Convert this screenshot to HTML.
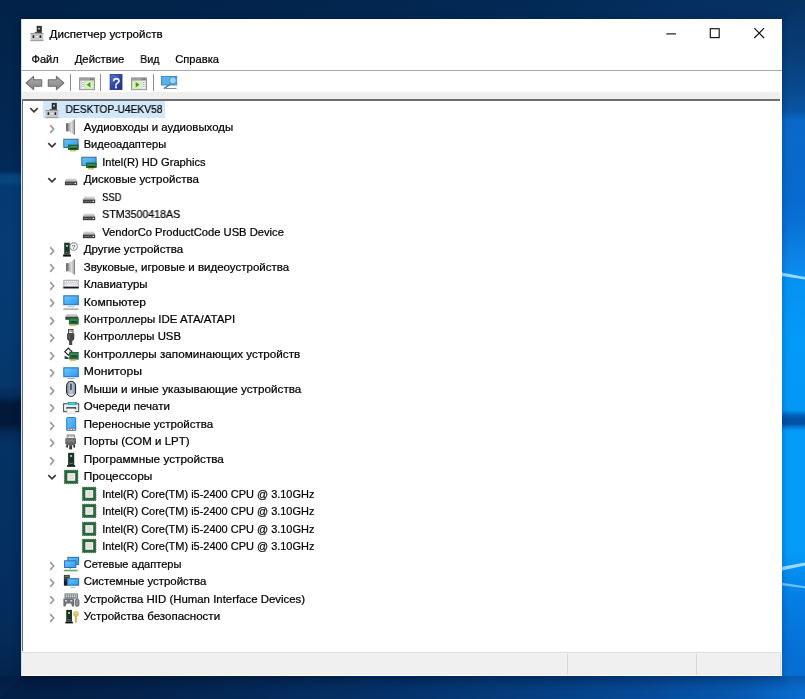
<!DOCTYPE html>
<html lang="ru"><head><meta charset="utf-8"><title>Диспетчер устройств</title>
<style>
html,body{margin:0;padding:0;}
body{width:805px;height:699px;overflow:hidden;position:relative;background:#04285a;font-family:'Liberation Sans', sans-serif;font-size:10.8px;}
#bg{position:absolute;left:0;top:0;width:805px;height:699px;}
#win{position:absolute;left:21px;top:19px;width:761px;height:657px;background:#fff;box-shadow:0 1px 7px rgba(0,0,20,0.28);}
.a{position:absolute;display:block;overflow:visible;}
.t{position:absolute;white-space:pre;will-change:transform;-webkit-text-stroke:0.22px #000;filter:blur(0.35px);line-height:14px;height:14px;font-size:10.8px;transform-origin:0 50%;}
.sel{position:absolute;background:#d1e8fb;}
#menuline{position:absolute;left:21px;top:69.5px;width:761px;height:1px;background:#a9a9a9;}
#tbband{position:absolute;left:21.6px;top:92px;width:758.2px;height:7px;background:#efefef;}
#treetop{position:absolute;left:22px;top:99.1px;width:757.6px;height:1.8px;background:#6e6e6e;}
#treeleft{position:absolute;left:22px;top:99px;width:1px;height:551.8px;background:#6c7076;}
#winleft{position:absolute;left:21px;top:19px;width:1px;height:657px;background:#cfe0f2;}
#status{position:absolute;left:22px;top:652.3px;width:759px;height:23px;background:#f0f0f0;border-top:1.3px solid #dcdcdc;box-sizing:border-box;}
.sd{position:absolute;top:654px;width:1px;height:21px;background:#d9d9d9;}
.sep{position:absolute;top:74px;width:1px;height:17px;background:#8d8d8d;}
</style></head>
<body>
<svg width="0" height="0" style="position:absolute"><defs><linearGradient id="gSp" x1="0" y1="0" x2="1" y2="0"><stop offset="0" stop-color="#6f6f6f"/><stop offset="0.3" stop-color="#a9a9a9"/><stop offset="0.62" stop-color="#dedede"/><stop offset="0.85" stop-color="#b4b4b4"/><stop offset="1" stop-color="#7d7d7d"/></linearGradient><linearGradient id="gScr" x1="0" y1="0" x2="1" y2="1"><stop offset="0" stop-color="#6cc4fb"/><stop offset="1" stop-color="#2f9bee"/></linearGradient><linearGradient id="gMs" x1="0" y1="0" x2="1" y2="0"><stop offset="0" stop-color="#7f8a9c"/><stop offset="0.5" stop-color="#c3cad6"/><stop offset="1" stop-color="#8490a4"/></linearGradient><linearGradient id="gHelp" x1="0" y1="0" x2="1" y2="1"><stop offset="0" stop-color="#5b78d0"/><stop offset="0.5" stop-color="#2f47ad"/><stop offset="1" stop-color="#22328c"/></linearGradient><linearGradient id="gArr" x1="0" y1="0" x2="0" y2="1"><stop offset="0" stop-color="#adadad"/><stop offset="1" stop-color="#858585"/></linearGradient><linearGradient id="gDk" x1="0" y1="0" x2="0" y2="1"><stop offset="0" stop-color="#e2e2e2"/><stop offset="1" stop-color="#a8a8a8"/></linearGradient></defs></svg>
<svg id="bg" width="805" height="699" viewBox="0 0 805 699">
<defs>
<linearGradient id="gl" x1="0" y1="0" x2="0" y2="1"><stop offset="0.0000" stop-color="rgb(2,34,72)"/><stop offset="0.1431" stop-color="rgb(2,38,80)"/><stop offset="0.2446" stop-color="rgb(2,42,88)"/><stop offset="0.2518" stop-color="rgb(8,68,126)"/><stop offset="0.2589" stop-color="rgb(8,70,128)"/><stop offset="0.2675" stop-color="rgb(4,58,114)"/><stop offset="0.3505" stop-color="rgb(5,60,116)"/><stop offset="0.4721" stop-color="rgb(5,58,112)"/><stop offset="0.5508" stop-color="rgb(5,54,106)"/><stop offset="0.5665" stop-color="rgb(4,44,90)"/><stop offset="0.5780" stop-color="rgb(2,25,58)"/><stop offset="0.6066" stop-color="rgb(2,25,58)"/><stop offset="0.6195" stop-color="rgb(4,42,88)"/><stop offset="0.6366" stop-color="rgb(4,50,100)"/><stop offset="0.8011" stop-color="rgb(4,47,96)"/><stop offset="0.9156" stop-color="rgb(4,42,88)"/><stop offset="1.0000" stop-color="rgb(3,32,72)"/></linearGradient>
<linearGradient id="gr" x1="0" y1="0" x2="0" y2="1"><stop offset="0.0000" stop-color="rgb(6,50,100)"/><stop offset="0.0715" stop-color="rgb(8,60,118)"/><stop offset="0.1288" stop-color="rgb(9,74,144)"/><stop offset="0.1588" stop-color="rgb(9,84,164)"/><stop offset="0.1731" stop-color="rgb(10,104,200)"/><stop offset="0.2861" stop-color="rgb(8,106,206)"/><stop offset="0.3219" stop-color="rgb(8,114,214)"/><stop offset="0.3720" stop-color="rgb(14,132,232)"/><stop offset="0.4034" stop-color="rgb(6,146,242)"/><stop offset="0.4864" stop-color="rgb(4,154,248)"/><stop offset="0.5866" stop-color="rgb(4,152,246)"/><stop offset="0.5937" stop-color="rgb(2,100,190)"/><stop offset="0.5994" stop-color="rgb(2,82,166)"/><stop offset="0.6066" stop-color="rgb(2,82,166)"/><stop offset="0.6109" stop-color="rgb(4,120,214)"/><stop offset="0.6166" stop-color="rgb(4,156,248)"/><stop offset="0.7868" stop-color="rgb(4,156,248)"/><stop offset="0.8226" stop-color="rgb(4,140,238)"/><stop offset="0.8584" stop-color="rgb(4,126,228)"/><stop offset="0.9299" stop-color="rgb(6,112,214)"/><stop offset="1.0000" stop-color="rgb(10,108,208)"/></linearGradient>
<linearGradient id="gt" x1="0" y1="0" x2="1" y2="0"><stop offset="0.0000" stop-color="rgb(2,34,72)"/><stop offset="0.4969" stop-color="rgb(2,38,80)"/><stop offset="0.7453" stop-color="rgb(3,44,90)"/><stop offset="1.0000" stop-color="rgb(6,50,100)"/></linearGradient>
<linearGradient id="gb" x1="0" y1="0" x2="1" y2="0"><stop offset="0.0000" stop-color="rgb(3,30,68)"/><stop offset="0.1677" stop-color="rgb(3,34,76)"/><stop offset="0.3354" stop-color="rgb(4,42,90)"/><stop offset="0.4969" stop-color="rgb(4,50,106)"/><stop offset="0.6708" stop-color="rgb(5,62,128)"/><stop offset="0.8075" stop-color="rgb(5,74,152)"/><stop offset="0.9193" stop-color="rgb(6,88,176)"/><stop offset="0.9714" stop-color="rgb(8,102,198)"/><stop offset="1.0000" stop-color="rgb(10,110,212)"/></linearGradient>
</defs>
<rect width="805" height="699" fill="#063c7c"/>
<rect x="0" y="0" width="30" height="699" fill="url(#gl)"/>
<rect x="775" y="0" width="30" height="699" fill="url(#gr)"/>
<path d="M0 0 H805 L775 30 H30 Z" fill="url(#gt)"/>
<path d="M0 699 H805 L775 669 H30 Z" fill="url(#gb)"/>
<linearGradient id="gsh" x1="0" y1="0" x2="0" y2="1"><stop offset="0" stop-color="#000618" stop-opacity="0.2"/><stop offset="1" stop-color="#000618" stop-opacity="0"/></linearGradient>
<rect x="0" y="676" width="805" height="16" fill="url(#gsh)"/>
<g style="filter:blur(0.7px)">
<path d="M775 271.2 L805 277 L805 279.4 L775 275 Z" fill="#a8e2ff" opacity="0.9"/>
<path d="M775 568 L805 562.6 L805 565.4 L775 572 Z" fill="#a8e2ff" opacity="0.9"/>
<path d="M775 581.8 L805 586.2 L805 588.2 L775 584.4 Z" fill="#8fd4fc" opacity="0.75"/>
</g>
</svg>
<div id="win"></div>
<svg class="a" style="left:26.50px;top:22.70px" width="20" height="20" viewBox="-10 -10 20 20"><rect x="-0.3" y="-7.1" width="5.1" height="7.4" fill="#2f2f2f"/><rect x="1.2" y="-5.2" width="1.6" height="1.7" fill="#d4d4d4"/><rect x="-2.4" y="-0.9" width="7.4" height="1.2" fill="#555"/><rect x="-6.5" y="0.1" width="12.9" height="8" fill="#c9c9c9"/><rect x="-6.5" y="0.1" width="12.9" height="1" fill="#949494"/><rect x="-6.5" y="7" width="12.9" height="1.1" fill="#a0a0a0"/><rect x="-4.4" y="2.3" width="1.6" height="2.6" fill="#1b1b1b"/><rect x="2.6" y="2.3" width="1.6" height="2.6" fill="#1b1b1b"/><rect x="-1.6" y="3" width="3" height="1.2" fill="#e4e4e4"/></svg>
<span class="t" style="left:49px;top:27px;transform:translate(0.60px,0) scaleX(1.0714);color:#000">Диспетчер устройств</span>
<svg class="a" style="left:660px;top:20px" width="120" height="28" viewBox="0 0 120 28">
<path d="M6.3 13.9 H15.9" stroke="#111" stroke-width="1.15" fill="none"/>
<rect x="50.3" y="8.7" width="8.9" height="8.9" stroke="#111" stroke-width="1.15" fill="none"/>
<path d="M94.3 8.2 L104.1 18 M104.1 8.2 L94.3 18" stroke="#111" stroke-width="1.15" fill="none"/>
</svg>
<span class="t" style="left:31px;top:52px;transform:translate(0.50px,0) scaleX(1.0284);color:#000">Файл</span><span class="t" style="left:74px;top:52px;transform:translate(0.70px,0) scaleX(1.0470);color:#000">Действие</span><span class="t" style="left:140px;top:52px;transform:translate(0.30px,0) scaleX(0.9771);color:#000">Вид</span><span class="t" style="left:175px;top:52px;transform:translate(0.20px,0) scaleX(1.0340);color:#000">Справка</span>
<div id="menuline"></div>
<svg class="a" style="will-change:transform;left:24.00px;top:73.00px" width="20" height="20" viewBox="-10 -10 20 20"><path d="M-7.8 0 L-0.4 -6.6 V-3.3 H7.7 V3.3 H-0.4 V6.6 Z" fill="url(#gArr)" stroke="#707070" stroke-width="1.1" stroke-linejoin="round"/></svg><svg class="a" style="will-change:transform;left:46.20px;top:73.00px" width="20" height="20" viewBox="-10 -10 20 20"><path d="M7.8 0 L0.4 -6.6 V-3.3 H-7.7 V3.3 H0.4 V6.6 Z" fill="url(#gArr)" stroke="#707070" stroke-width="1.1" stroke-linejoin="round"/></svg><svg class="a" style="will-change:transform;left:76.50px;top:73.00px" width="20" height="20" viewBox="-10 -10 20 20"><rect x="-7.4" y="-5.1" width="14.9" height="11.8" fill="#d9d9d9" stroke="#8c8c8c" stroke-width="0.9"/><rect x="-7.4" y="-5.1" width="14.9" height="2.6" fill="#9d9d9d"/><rect x="3.2" y="-4.4" width="1.2" height="1.1" fill="#5a5a5a"/><rect x="5.2" y="-4.4" width="1.2" height="1.1" fill="#5a5a5a"/><rect x="-4.9" y="-2" width="1.9" height="7.6" fill="#fff"/><rect x="-4.5" y="-0.9" width="1" height="0.9" fill="#4a68c0"/><rect x="-4.5" y="1.1" width="1" height="0.9" fill="#4a68c0"/><rect x="-4.5" y="3.1" width="1" height="0.9" fill="#4a68c0"/><rect x="-2.1" y="-2" width="7.9" height="7.6" fill="#dcf2b6"/><path d="M3.4 -0.9 V4.5 L-0.4 1.8 Z" fill="#3c9a35"/></svg><svg class="a" style="will-change:transform;left:106.00px;top:73.00px" width="20" height="20" viewBox="-10 -10 20 20"><rect x="-5.9" y="-8.4" width="11.9" height="15" fill="url(#gHelp)" stroke="#1f2f86" stroke-width="0.8"/><text x="0.2" y="5" font-size="15.5" text-anchor="middle" fill="#fff" stroke="#fff" stroke-width="0.5" transform="scale(0.86,1)" font-family="Liberation Sans, sans-serif">?</text></svg><svg class="a" style="will-change:transform;left:128.90px;top:73.00px" width="20" height="20" viewBox="-10 -10 20 20"><rect x="-7.4" y="-5.1" width="14.9" height="11.8" fill="#d9d9d9" stroke="#8c8c8c" stroke-width="0.9"/><rect x="-7.4" y="-5.1" width="14.9" height="2.6" fill="#9d9d9d"/><rect x="3.2" y="-4.4" width="1.2" height="1.1" fill="#5a5a5a"/><rect x="5.2" y="-4.4" width="1.2" height="1.1" fill="#5a5a5a"/><rect x="3.6" y="-2" width="2.2" height="7.6" fill="#fff"/><rect x="4.3" y="-0.9" width="1" height="0.9" fill="#4a68c0"/><rect x="4.3" y="1.1" width="1" height="0.9" fill="#4a68c0"/><rect x="4.3" y="3.1" width="1" height="0.9" fill="#4a68c0"/><rect x="-5.9" y="-2" width="8.6" height="7.6" fill="#dcf2b6"/><path d="M-3.3 -0.9 V4.5 L0.6 1.8 Z" fill="#3c9a35"/></svg><svg class="a" style="will-change:transform;left:159.10px;top:73.00px" width="20" height="20" viewBox="-10 -10 20 20"><rect x="-7.6" y="-6.6" width="15.3" height="8.6" fill="#58b2ea" stroke="#3a86bf" stroke-width="0.9"/><path d="M2.2 0.6 L-5.2 5.6" stroke="#4a7fa8" stroke-width="1.5"/><circle cx="3.9" cy="-2.6" r="3.5" fill="#9dd4f6" stroke="#3f8fca" stroke-width="0.9"/><rect x="-3.4" y="5" width="10.9" height="1" fill="#8a8f94"/></svg>
<div class="sep" style="left:70px"></div><div class="sep" style="left:100px"></div><div class="sep" style="left:153px"></div>
<div id="tbband"></div>
<div id="treetop"></div>
<div id="winleft"></div>
<div id="treeleft"></div>
<div class="sel" style="left:43.2px;top:101.25px;width:122.2px;height:16.8px"></div><svg class="a" style="left:25.60px;top:102.35px" width="16" height="16" viewBox="-8 -8 16 16"><path d="M-3.7 -1.9 L0 1.8 L3.7 -1.9" fill="none" stroke="#383838" stroke-width="1.65"/></svg><svg class="a" style="left:42.00px;top:99.75px" width="20" height="20" viewBox="-10 -10 20 20"><rect x="-0.3" y="-7.1" width="5.1" height="7.4" fill="#2f2f2f"/><rect x="1.2" y="-5.2" width="1.6" height="1.7" fill="#d4d4d4"/><rect x="-2.4" y="-0.9" width="7.4" height="1.2" fill="#555"/><rect x="-6.5" y="0.1" width="12.9" height="8" fill="#c9c9c9"/><rect x="-6.5" y="0.1" width="12.9" height="1" fill="#949494"/><rect x="-6.5" y="7" width="12.9" height="1.1" fill="#a0a0a0"/><rect x="-4.4" y="2.3" width="1.6" height="2.6" fill="#1b1b1b"/><rect x="2.6" y="2.3" width="1.6" height="2.6" fill="#1b1b1b"/><rect x="-1.6" y="3" width="3" height="1.2" fill="#e4e4e4"/></svg><span class="t" style="left:65px;top:102px;transform:translate(0.60px,0) scaleX(0.9451);color:#000">DESKTOP-U4EKV58</span><svg class="a" style="left:43.90px;top:120.53px" width="16" height="16" viewBox="-8 -8 16 16"><path d="M-1.8 -3.8 L1.6 0 L-1.8 3.8" fill="none" stroke="#9e9e9e" stroke-width="1.75"/></svg><svg class="a" style="left:60.80px;top:116.93px" width="20" height="20" viewBox="-10 -10 20 20"><path d="M-4.9 -3.8 H-2.3 L3.0 -7.6 H3.9 V7.6 H3.0 L-2.3 4.2 H-4.9 Z" fill="url(#gSp)"/><rect x="-4.9" y="-3.8" width="2.1" height="8" fill="#6a6a6a" opacity="0.75"/><rect x="3.1" y="-7.6" width="0.9" height="15.2" fill="#7a7a7a" opacity="0.8"/></svg><span class="t" style="left:83px;top:120px;transform:translate(0.70px,0) scaleX(1.0589);color:#000">Аудиовходы и аудиовыходы</span><svg class="a" style="left:43.90px;top:137.31px" width="16" height="16" viewBox="-8 -8 16 16"><path d="M-3.7 -1.9 L0 1.8 L3.7 -1.9" fill="none" stroke="#383838" stroke-width="1.65"/></svg><svg class="a" style="left:60.80px;top:134.41px" width="20" height="20" viewBox="-10 -10 20 20"><rect x="-7.2" y="-4.8" width="14.3" height="8.2" fill="url(#gScr)" stroke="#2c5f82" stroke-width="0.9"/><rect x="-3.0" y="0.6" width="10.70" height="5.40" fill="#226a3c"/><rect x="-1.8" y="2.2" width="8.10" height="1.3" fill="#7fc08a" opacity="0.45"/><rect x="-0.6000000000000001" y="4.0" width="6.10" height="1.2" fill="#123f22"/><rect x="-1.0" y="6.0" width="6.40" height="1.5" fill="#d9c36f"/></svg><span class="t" style="left:83px;top:137px;transform:translate(0.70px,0) scaleX(1.0262);color:#000">Видеоадаптеры</span><svg class="a" style="left:79.35px;top:151.89px" width="20" height="20" viewBox="-10 -10 20 20"><rect x="-7.2" y="-4.8" width="14.3" height="8.2" fill="url(#gScr)" stroke="#2c5f82" stroke-width="0.9"/><rect x="-3.0" y="0.6" width="10.70" height="5.40" fill="#226a3c"/><rect x="-1.8" y="2.2" width="8.10" height="1.3" fill="#7fc08a" opacity="0.45"/><rect x="-0.6000000000000001" y="4.0" width="6.10" height="1.2" fill="#123f22"/><rect x="-1.0" y="6.0" width="6.40" height="1.5" fill="#d9c36f"/></svg><span class="t" style="left:102px;top:155px;transform:translate(0.20px,0) scaleX(1.0319);color:#000">Intel(R) HD Graphics</span><svg class="a" style="left:43.90px;top:172.27px" width="16" height="16" viewBox="-8 -8 16 16"><path d="M-3.7 -1.9 L0 1.8 L3.7 -1.9" fill="none" stroke="#383838" stroke-width="1.65"/></svg><svg class="a" style="left:60.80px;top:169.37px" width="20" height="20" viewBox="-10 -10 20 20"><path d="M-4.9 -0.6 H5 L6.2 2.7 H-6.1 Z" fill="url(#gDk)"/><rect x="-6.1" y="2.6" width="12.3" height="3.6" fill="#3a3f3e"/><rect x="-5" y="3.9" width="7.6" height="0.9" fill="#6f7775"/><rect x="3.6" y="3.8" width="1.4" height="1.2" fill="#f0f0f0"/></svg><span class="t" style="left:83px;top:172px;transform:translate(0.70px,0) scaleX(1.0695);color:#000">Дисковые устройства</span><svg class="a" style="left:79.35px;top:186.85px" width="20" height="20" viewBox="-10 -10 20 20"><path d="M-4.9 -0.6 H5 L6.2 2.7 H-6.1 Z" fill="url(#gDk)"/><rect x="-6.1" y="2.6" width="12.3" height="3.6" fill="#3a3f3e"/><rect x="-5" y="3.9" width="7.6" height="0.9" fill="#6f7775"/><rect x="3.6" y="3.8" width="1.4" height="1.2" fill="#f0f0f0"/></svg><span class="t" style="left:102px;top:190px;transform:translate(0.20px,0) scaleX(0.8647);color:#000">SSD</span><svg class="a" style="left:79.35px;top:204.33px" width="20" height="20" viewBox="-10 -10 20 20"><path d="M-4.9 -0.6 H5 L6.2 2.7 H-6.1 Z" fill="url(#gDk)"/><rect x="-6.1" y="2.6" width="12.3" height="3.6" fill="#3a3f3e"/><rect x="-5" y="3.9" width="7.6" height="0.9" fill="#6f7775"/><rect x="3.6" y="3.8" width="1.4" height="1.2" fill="#f0f0f0"/></svg><span class="t" style="left:102px;top:207px;transform:translate(0.20px,0) scaleX(0.9857);color:#000">STM3500418AS</span><svg class="a" style="left:79.35px;top:221.81px" width="20" height="20" viewBox="-10 -10 20 20"><path d="M-4.9 -0.6 H5 L6.2 2.7 H-6.1 Z" fill="url(#gDk)"/><rect x="-6.1" y="2.6" width="12.3" height="3.6" fill="#3a3f3e"/><rect x="-5" y="3.9" width="7.6" height="0.9" fill="#6f7775"/><rect x="3.6" y="3.8" width="1.4" height="1.2" fill="#f0f0f0"/></svg><span class="t" style="left:102px;top:225px;transform:translate(0.20px,0) scaleX(1.0368);color:#000">VendorCo ProductCode USB Device</span><svg class="a" style="left:43.90px;top:242.89px" width="16" height="16" viewBox="-8 -8 16 16"><path d="M-1.8 -3.8 L1.6 0 L-1.8 3.8" fill="none" stroke="#9e9e9e" stroke-width="1.75"/></svg><svg class="a" style="will-change:transform;left:60.80px;top:239.29px" width="20" height="20" viewBox="-10 -10 20 20"><rect x="-6.8" y="-6.3" width="5.60" height="11.80" fill="#1d3529"/><rect x="-5.00" y="-4.10" width="1.9" height="1.9" fill="#9fd8a8"/><rect x="-5.60" y="3.30" width="3.20" height="0.9" fill="#6d7f74"/><rect x="-7.9" y="5.5" width="7.80" height="2.10" fill="#0f0f0f"/><circle cx="2.7" cy="-2.4" r="3.7" fill="#fff" stroke="#8f959c" stroke-width="1.1"/><text x="2.7" y="-0.2" font-size="6.2" font-weight="bold" text-anchor="middle" fill="#4a5563" font-family="Liberation Sans, sans-serif">?</text></svg><span class="t" style="left:83px;top:242px;transform:translate(0.70px,0) scaleX(1.0686);color:#000">Другие устройства</span><svg class="a" style="left:43.90px;top:260.37px" width="16" height="16" viewBox="-8 -8 16 16"><path d="M-1.8 -3.8 L1.6 0 L-1.8 3.8" fill="none" stroke="#9e9e9e" stroke-width="1.75"/></svg><svg class="a" style="left:60.80px;top:256.77px" width="20" height="20" viewBox="-10 -10 20 20"><path d="M-4.9 -3.8 H-2.3 L3.0 -7.6 H3.9 V7.6 H3.0 L-2.3 4.2 H-4.9 Z" fill="url(#gSp)"/><rect x="-4.9" y="-3.8" width="2.1" height="8" fill="#6a6a6a" opacity="0.75"/><rect x="3.1" y="-7.6" width="0.9" height="15.2" fill="#7a7a7a" opacity="0.8"/></svg><span class="t" style="left:83px;top:260px;transform:translate(0.70px,0) scaleX(1.0650);color:#000">Звуковые, игровые и видеоустройства</span><svg class="a" style="left:43.90px;top:277.85px" width="16" height="16" viewBox="-8 -8 16 16"><path d="M-1.8 -3.8 L1.6 0 L-1.8 3.8" fill="none" stroke="#9e9e9e" stroke-width="1.75"/></svg><svg class="a" style="left:60.80px;top:274.25px" width="20" height="20" viewBox="-10 -10 20 20"><rect x="-7.6" y="-4.2" width="15.3" height="8.5" fill="#9a9da2"/><rect x="-6.9" y="-3.5" width="13.9" height="6" fill="#c9ccd0"/><path d="M-6.3 -2.5 H6.6" stroke="#fff" stroke-width="1.1" stroke-dasharray="1.3 0.7"/><path d="M-5.6 -0.7 H6.6" stroke="#fff" stroke-width="1.1" stroke-dasharray="1.3 0.7"/><path d="M-6.3 1.1 H6.6" stroke="#fff" stroke-width="1.1" stroke-dasharray="1.6 0.6 6.5 0.6 1.6 0.6"/><rect x="-7.6" y="2.9" width="15.3" height="1.5" fill="#151515"/></svg><span class="t" style="left:83px;top:277px;transform:translate(0.70px,0) scaleX(1.0589);color:#000">Клавиатуры</span><svg class="a" style="left:43.90px;top:295.33px" width="16" height="16" viewBox="-8 -8 16 16"><path d="M-1.8 -3.8 L1.6 0 L-1.8 3.8" fill="none" stroke="#9e9e9e" stroke-width="1.75"/></svg><svg class="a" style="left:60.80px;top:291.73px" width="20" height="20" viewBox="-10 -10 20 20"><rect x="-7.2" y="-6.2" width="14.5" height="8.9" fill="url(#gScr)" stroke="#2475ba" stroke-width="1.05"/><rect x="-3.4" y="4.4" width="7" height="0.8" fill="#7fb2d8"/><rect x="-7.6" y="6.4" width="15.3" height="1.4" fill="#a2a2a2"/></svg><span class="t" style="left:83px;top:295px;transform:translate(0.70px,0) scaleX(1.1147);color:#000">Компьютер</span><svg class="a" style="left:43.90px;top:312.81px" width="16" height="16" viewBox="-8 -8 16 16"><path d="M-1.8 -3.8 L1.6 0 L-1.8 3.8" fill="none" stroke="#9e9e9e" stroke-width="1.75"/></svg><svg class="a" style="left:60.80px;top:309.21px" width="20" height="20" viewBox="-10 -10 20 20"><path d="M-4.6 -5.3 H6 L7.2 -2 H-5.7 Z" fill="url(#gDk)"/><rect x="-5.7" y="-2.1" width="12.9" height="2.9" fill="#33473d"/><rect x="-2.1" y="-1.2" width="9.80" height="6.80" fill="#226a3c"/><rect x="-0.9000000000000001" y="0.40000000000000013" width="7.20" height="1.3" fill="#7fc08a" opacity="0.45"/><rect x="0.2999999999999998" y="2.2" width="5.20" height="1.2" fill="#123f22"/><rect x="-0.9" y="5.6" width="5.80" height="1.5" fill="#d9c36f"/></svg><span class="t" style="left:83px;top:312px;transform:translate(0.70px,0) scaleX(1.0606);color:#000">Контроллеры IDE ATA/ATAPI</span><svg class="a" style="left:43.90px;top:330.29px" width="16" height="16" viewBox="-8 -8 16 16"><path d="M-1.8 -3.8 L1.6 0 L-1.8 3.8" fill="none" stroke="#9e9e9e" stroke-width="1.75"/></svg><svg class="a" style="left:60.80px;top:326.69px" width="20" height="20" viewBox="-10 -10 20 20"><rect x="-2.5" y="-7.6" width="4.5" height="4.2" fill="#e9e9e9" stroke="#3d3d3d" stroke-width="0.9"/><rect x="-1.5" y="-6.5" width="0.9" height="1.1" fill="#333"/><rect x="0.2" y="-6.5" width="0.9" height="1.1" fill="#333"/><path d="M-4 -3.6 H3.3 V1.2 Q3.3 3.2 1.2 4 V7.9 H-1.9 V4 Q-4 3.2 -4 1.2 Z" fill="#474747"/><rect x="-2.6" y="-2.6" width="1.1" height="4.4" fill="#7c7c7c" opacity="0.7"/></svg><span class="t" style="left:83px;top:329px;transform:translate(0.70px,0) scaleX(1.0514);color:#000">Контроллеры USB</span><svg class="a" style="left:43.90px;top:347.77px" width="16" height="16" viewBox="-8 -8 16 16"><path d="M-1.8 -3.8 L1.6 0 L-1.8 3.8" fill="none" stroke="#9e9e9e" stroke-width="1.75"/></svg><svg class="a" style="left:60.80px;top:344.17px" width="20" height="20" viewBox="-10 -10 20 20"><path d="M-2.6 -5.9 L1.0 -2.3 L-2.6 1.3 L-6.2 -2.3 Z" fill="#fff" stroke="#161616" stroke-width="1.1"/><rect x="-1.9" y="-3.6" width="1.6" height="1.1" fill="#8a8a8a"/><path d="M-6.4 1.8 L-2.4 3.4 V5 H-6.4 Z" fill="#2a3c5c"/><rect x="-1.8" y="-2.0" width="9.50" height="7.60" fill="#226a3c"/><rect x="-0.6000000000000001" y="-0.3999999999999999" width="6.90" height="1.3" fill="#7fc08a" opacity="0.45"/><rect x="0.5999999999999999" y="1.4" width="4.90" height="1.2" fill="#123f22"/><rect x="-0.9" y="5.6" width="5.80" height="1.5" fill="#d9c36f"/></svg><span class="t" style="left:83px;top:347px;transform:translate(0.70px,0) scaleX(1.0844);color:#000">Контроллеры запоминающих устройств</span><svg class="a" style="left:43.90px;top:365.25px" width="16" height="16" viewBox="-8 -8 16 16"><path d="M-1.8 -3.8 L1.6 0 L-1.8 3.8" fill="none" stroke="#9e9e9e" stroke-width="1.75"/></svg><svg class="a" style="left:60.80px;top:361.65px" width="20" height="20" viewBox="-10 -10 20 20"><rect x="-7.2" y="-4.2" width="14.5" height="8.9" fill="url(#gScr)" stroke="#2475ba" stroke-width="1.05"/><rect x="-3.5" y="6.1" width="7.2" height="0.8" fill="#6a9fd0"/></svg><span class="t" style="left:83px;top:364px;transform:translate(0.70px,0) scaleX(1.1253);color:#000">Мониторы</span><svg class="a" style="left:43.90px;top:382.73px" width="16" height="16" viewBox="-8 -8 16 16"><path d="M-1.8 -3.8 L1.6 0 L-1.8 3.8" fill="none" stroke="#9e9e9e" stroke-width="1.75"/></svg><svg class="a" style="left:60.80px;top:379.13px" width="20" height="20" viewBox="-10 -10 20 20"><rect x="-4.4" y="-7.7" width="9" height="15.1" rx="4.4" fill="url(#gMs)" stroke="#161a24" stroke-width="1"/><rect x="-0.65" y="-5.6" width="1.3" height="6.7" rx="0.6" fill="#1e2533"/><path d="M-2.6 5.4 Q0.1 7.1 2.8 5.4" stroke="#fff" stroke-width="0.9" fill="none"/></svg><span class="t" style="left:83px;top:382px;transform:translate(0.70px,0) scaleX(1.0860);color:#000">Мыши и иные указывающие устройства</span><svg class="a" style="left:43.90px;top:400.21px" width="16" height="16" viewBox="-8 -8 16 16"><path d="M-1.8 -3.8 L1.6 0 L-1.8 3.8" fill="none" stroke="#9e9e9e" stroke-width="1.75"/></svg><svg class="a" style="left:60.80px;top:396.61px" width="20" height="20" viewBox="-10 -10 20 20"><rect x="-7.4" y="-3.3" width="15.1" height="8" fill="#e6e6e3" stroke="#47474c" stroke-width="1"/><rect x="-6.7" y="-1.6" width="13.7" height="4.6" fill="#efefec"/><rect x="-3.9" y="-3.9" width="10" height="4.2" fill="#d0f2f8"/><rect x="-3.6" y="-4.9" width="9.6" height="2.7" rx="0.8" fill="#1f9698"/><rect x="-1.9" y="-4.2" width="6.2" height="0.9" fill="#8fdfe0"/><rect x="-4.7" y="0.3" width="9.9" height="1.5" fill="#141414"/><rect x="-3.9" y="1.8" width="7.9" height="4.5" fill="#fff" stroke="#c4c4cf" stroke-width="0.6"/><rect x="-2.6" y="4.4" width="5.3" height="0.9" fill="#dedee6"/></svg><span class="t" style="left:83px;top:399px;transform:translate(0.70px,0) scaleX(1.0630);color:#000">Очереди печати</span><svg class="a" style="left:43.90px;top:417.69px" width="16" height="16" viewBox="-8 -8 16 16"><path d="M-1.8 -3.8 L1.6 0 L-1.8 3.8" fill="none" stroke="#9e9e9e" stroke-width="1.75"/></svg><svg class="a" style="left:60.80px;top:414.09px" width="20" height="20" viewBox="-10 -10 20 20"><rect x="-4.3" y="-6.5" width="9" height="13" rx="0.8" fill="url(#gScr)" stroke="#2f7cc0" stroke-width="1"/><rect x="-4.7" y="4" width="9.8" height="2.9" fill="#74869c"/><rect x="-3.2" y="4.9" width="1.6" height="1" fill="#e8eef4"/><rect x="-0.6" y="4.9" width="1.6" height="1" fill="#e8eef4"/><rect x="2" y="4.9" width="1.6" height="1" fill="#e8eef4"/></svg><span class="t" style="left:83px;top:417px;transform:translate(0.70px,0) scaleX(1.0650);color:#000">Переносные устройства</span><svg class="a" style="left:43.90px;top:435.17px" width="16" height="16" viewBox="-8 -8 16 16"><path d="M-1.8 -3.8 L1.6 0 L-1.8 3.8" fill="none" stroke="#9e9e9e" stroke-width="1.75"/></svg><svg class="a" style="left:60.80px;top:431.57px" width="20" height="20" viewBox="-10 -10 20 20"><rect x="-3.9" y="-7.1" width="7.4" height="3.6" fill="#f1f1f1" stroke="#7b7b7b" stroke-width="0.8"/><rect x="-3.0" y="-6.4" width="0.9" height="1" fill="#555"/><rect x="-1.3" y="-6.4" width="0.9" height="1" fill="#555"/><rect x="0.4" y="-6.4" width="0.9" height="1" fill="#555"/><rect x="2.1" y="-6.4" width="0.9" height="1" fill="#555"/><path d="M-5.7 -3.7 H5 V1.2 L3.4 3.3 H-4.1 L-5.7 1.2 Z" fill="#626262"/><rect x="-4.3" y="-2.3" width="7.9" height="0.9" fill="#9a9a9a"/><rect x="-4.3" y="-0.5" width="7.9" height="0.9" fill="#8a8a8a"/><rect x="-4.8" y="3.0" width="1.7" height="2.6" fill="#2a2a2a"/><rect x="2.4" y="3.0" width="1.7" height="2.6" fill="#2a2a2a"/><rect x="-1.8" y="3.2" width="2.9" height="4.2" fill="#3c3c3c"/></svg><span class="t" style="left:83px;top:434px;transform:translate(0.70px,0) scaleX(1.0648);color:#000">Порты (COM и LPT)</span><svg class="a" style="left:43.90px;top:452.65px" width="16" height="16" viewBox="-8 -8 16 16"><path d="M-1.8 -3.8 L1.6 0 L-1.8 3.8" fill="none" stroke="#9e9e9e" stroke-width="1.75"/></svg><svg class="a" style="left:60.80px;top:449.05px" width="20" height="20" viewBox="-10 -10 20 20"><rect x="-2.9" y="-6.2" width="6.10" height="12.30" fill="#1d3529"/><rect x="-0.85" y="-4.00" width="1.9" height="1.9" fill="#9fd8a8"/><rect x="-1.70" y="3.90" width="3.70" height="0.9" fill="#6d7f74"/><rect x="-3.9" y="6.1" width="8.10" height="1.70" fill="#0f0f0f"/></svg><span class="t" style="left:83px;top:452px;transform:translate(0.70px,0) scaleX(1.0875);color:#000">Программные устройства</span><svg class="a" style="left:43.90px;top:469.43px" width="16" height="16" viewBox="-8 -8 16 16"><path d="M-3.7 -1.9 L0 1.8 L3.7 -1.9" fill="none" stroke="#383838" stroke-width="1.65"/></svg><svg class="a" style="left:60.80px;top:466.53px" width="20" height="20" viewBox="-10 -10 20 20"><rect x="-6.6" y="-6.8" width="13.5" height="13.4" fill="#2b653c"/><rect x="-6.6" y="-6.8" width="13.5" height="13.4" fill="none" stroke="#2b653c" stroke-width="0.9" stroke-dasharray="0.9 0.9"/><rect x="-3.7" y="-3.9" width="7.9" height="7.7" fill="#e9f1ec"/><rect x="-2.3" y="-2.5" width="5.1" height="4.9" fill="#e6dcdc"/></svg><span class="t" style="left:83px;top:469px;transform:translate(0.70px,0) scaleX(1.0971);color:#000">Процессоры</span><svg class="a" style="left:79.35px;top:484.01px" width="20" height="20" viewBox="-10 -10 20 20"><rect x="-6.6" y="-6.8" width="13.5" height="13.4" fill="#2b653c"/><rect x="-6.6" y="-6.8" width="13.5" height="13.4" fill="none" stroke="#2b653c" stroke-width="0.9" stroke-dasharray="0.9 0.9"/><rect x="-3.7" y="-3.9" width="7.9" height="7.7" fill="#e9f1ec"/><rect x="-2.3" y="-2.5" width="5.1" height="4.9" fill="#e6dcdc"/></svg><span class="t" style="left:102px;top:487px;transform:translate(0.20px,0) scaleX(1.0155);color:#000">Intel(R) Core(TM) i5-2400 CPU @ 3.10GHz</span><svg class="a" style="left:79.35px;top:501.49px" width="20" height="20" viewBox="-10 -10 20 20"><rect x="-6.6" y="-6.8" width="13.5" height="13.4" fill="#2b653c"/><rect x="-6.6" y="-6.8" width="13.5" height="13.4" fill="none" stroke="#2b653c" stroke-width="0.9" stroke-dasharray="0.9 0.9"/><rect x="-3.7" y="-3.9" width="7.9" height="7.7" fill="#e9f1ec"/><rect x="-2.3" y="-2.5" width="5.1" height="4.9" fill="#e6dcdc"/></svg><span class="t" style="left:102px;top:504px;transform:translate(0.20px,0) scaleX(1.0155);color:#000">Intel(R) Core(TM) i5-2400 CPU @ 3.10GHz</span><svg class="a" style="left:79.35px;top:518.97px" width="20" height="20" viewBox="-10 -10 20 20"><rect x="-6.6" y="-6.8" width="13.5" height="13.4" fill="#2b653c"/><rect x="-6.6" y="-6.8" width="13.5" height="13.4" fill="none" stroke="#2b653c" stroke-width="0.9" stroke-dasharray="0.9 0.9"/><rect x="-3.7" y="-3.9" width="7.9" height="7.7" fill="#e9f1ec"/><rect x="-2.3" y="-2.5" width="5.1" height="4.9" fill="#e6dcdc"/></svg><span class="t" style="left:102px;top:522px;transform:translate(0.20px,0) scaleX(1.0155);color:#000">Intel(R) Core(TM) i5-2400 CPU @ 3.10GHz</span><svg class="a" style="left:79.35px;top:536.45px" width="20" height="20" viewBox="-10 -10 20 20"><rect x="-6.6" y="-6.8" width="13.5" height="13.4" fill="#2b653c"/><rect x="-6.6" y="-6.8" width="13.5" height="13.4" fill="none" stroke="#2b653c" stroke-width="0.9" stroke-dasharray="0.9 0.9"/><rect x="-3.7" y="-3.9" width="7.9" height="7.7" fill="#e9f1ec"/><rect x="-2.3" y="-2.5" width="5.1" height="4.9" fill="#e6dcdc"/></svg><span class="t" style="left:102px;top:539px;transform:translate(0.20px,0) scaleX(1.0155);color:#000">Intel(R) Core(TM) i5-2400 CPU @ 3.10GHz</span><svg class="a" style="left:43.90px;top:557.53px" width="16" height="16" viewBox="-8 -8 16 16"><path d="M-1.8 -3.8 L1.6 0 L-1.8 3.8" fill="none" stroke="#9e9e9e" stroke-width="1.75"/></svg><svg class="a" style="left:60.80px;top:553.93px" width="20" height="20" viewBox="-10 -10 20 20"><rect x="-3.1" y="-6.6" width="10.7" height="7" fill="url(#gScr)" stroke="#2472b8" stroke-width="1.05"/><rect x="-6.4" y="-3.2" width="11.2" height="6.7" fill="url(#gScr)" stroke="#2472b8" stroke-width="1.05"/><rect x="-1.6" y="4.1" width="1.6" height="1.4" fill="#8fbfe6"/><rect x="-7.1" y="5.3" width="13.7" height="0.9" fill="#d6d6d6"/><rect x="-7.1" y="6.1" width="13.7" height="1.2" fill="#4fa64f"/></svg><span class="t" style="left:83px;top:557px;transform:translate(0.70px,0) scaleX(1.0227);color:#000">Сетевые адаптеры</span><svg class="a" style="left:43.90px;top:575.01px" width="16" height="16" viewBox="-8 -8 16 16"><path d="M-1.8 -3.8 L1.6 0 L-1.8 3.8" fill="none" stroke="#9e9e9e" stroke-width="1.75"/></svg><svg class="a" style="left:60.80px;top:571.41px" width="20" height="20" viewBox="-10 -10 20 20"><rect x="-7.1" y="-6.1" width="5.9" height="3.6" fill="#3a3d3d"/><rect x="-6.1" y="-5.2" width="3.8" height="0.9" fill="#8d9592"/><rect x="-7.1" y="-2.6" width="3.6" height="7.3" fill="#1b1b1d"/><rect x="-6.4" y="-1.4" width="2.2" height="0.9" fill="#4a5a6a"/><rect x="-3.3" y="-2.3" width="10.9" height="6.5" fill="url(#gScr)" stroke="#2472b8" stroke-width="1.05"/><rect x="-0.6" y="6.1" width="5" height="0.8" fill="#8fbfe6"/></svg><span class="t" style="left:83px;top:574px;transform:translate(0.70px,0) scaleX(1.0592);color:#000">Системные устройства</span><svg class="a" style="left:43.90px;top:592.49px" width="16" height="16" viewBox="-8 -8 16 16"><path d="M-1.8 -3.8 L1.6 0 L-1.8 3.8" fill="none" stroke="#9e9e9e" stroke-width="1.75"/></svg><svg class="a" style="left:60.80px;top:588.89px" width="20" height="20" viewBox="-10 -10 20 20"><rect x="-6.5" y="-5.6" width="13.4" height="5.2" fill="#757c85"/><path d="M-5.4 -4 H6" stroke="#fff" stroke-width="1.1" stroke-dasharray="1.3 0.7"/><path d="M-5.4 -2.2 H6" stroke="#f4f4f4" stroke-width="1.1" stroke-dasharray="1.3 0.7"/><path d="M-7.6 -0.5 H3.2 V7.4 H1.2 L0 4.6 H-4.4 L-5.6 7.4 H-7.6 Z" fill="#6b7077"/><rect x="-6" y="1" width="2.2" height="1.6" fill="#cfd6dc"/><rect x="-0.8" y="1" width="2" height="1.6" fill="#cfd6dc"/><rect x="4.4" y="0" width="3.6" height="7.4" rx="1.7" fill="#8c9299" stroke="#4b4f55" stroke-width="0.7"/></svg><span class="t" style="left:83px;top:592px;transform:translate(0.70px,0) scaleX(1.0568);color:#000">Устройства HID (Human Interface Devices)</span><svg class="a" style="left:43.90px;top:609.97px" width="16" height="16" viewBox="-8 -8 16 16"><path d="M-1.8 -3.8 L1.6 0 L-1.8 3.8" fill="none" stroke="#9e9e9e" stroke-width="1.75"/></svg><svg class="a" style="left:60.80px;top:606.37px" width="20" height="20" viewBox="-10 -10 20 20"><rect x="-4.8" y="-6.1" width="5.80" height="11.80" fill="#1d3529"/><rect x="-2.90" y="-3.90" width="1.9" height="1.9" fill="#9fd8a8"/><rect x="-3.60" y="3.50" width="3.40" height="0.9" fill="#6d7f74"/><rect x="-5.7" y="5.7" width="7.60" height="1.70" fill="#0f0f0f"/><circle cx="4.9" cy="-2.1" r="2.8" fill="#dcbc66"/><circle cx="4.9" cy="-3.0" r="0.8" fill="#fff6d8"/><path d="M3.9 0 H5.9 V5.8 L4.9 7.1 L3.9 5.8 Z" fill="#d2b05a"/></svg><span class="t" style="left:83px;top:609px;transform:translate(0.70px,0) scaleX(1.0677);color:#000">Устройства безопасности</span>
<div id="status"></div>
<div class="sd" style="left:567px"></div><div class="sd" style="left:696px"></div><div class="sd" style="left:780px"></div>
</body></html>
